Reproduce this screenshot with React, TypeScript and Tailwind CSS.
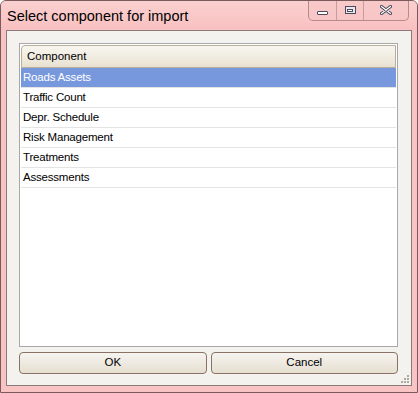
import React from "react";

const rows = ["Roads Assets", "Traffic Count", "Depr. Schedule", "Risk Management", "Treatments", "Assessments"];

export default function App() {
  return (
    <div
      className="relative w-[418px] h-[393px] overflow-hidden bg-[#f8c3c3] border border-[#7a5a5a] rounded-t-[6px] flex flex-col"
      style={{ fontFamily: '"Liberation Sans", Arial, sans-serif' }}
    >
      {/* title bar */}
      <div className="relative h-[29px] shrink-0 bg-gradient-to-b from-[#fbd0d0] to-[#f8c0c0] flex items-center pl-[6px] pt-[2px]">
        <span className="text-[14.5px] text-black leading-none">Select component for import</span>
        <div className="absolute left-[307px] top-[-1px] w-[101px] h-[21px] flex border border-[#b88a8a] border-t-0 rounded-b-[5px] bg-[#f6c4c4]/60">
          <div className="w-[28px] flex items-center justify-center border-r border-[#c99c9c]">
            <div className="mt-[5px] w-[11px] h-[4px] border border-[#4a4a5a] bg-white rounded-[1px]" />
          </div>
          <div className="w-[27px] flex items-center justify-center border-r border-[#c99c9c]">
            <div className="w-[11px] h-[8px] border-[1.5px] border-[#4a4a5a] bg-[#e8e8ee] flex items-center justify-center">
              <div className="w-[6px] h-[3px] border border-[#4a4a5a] bg-white" />
            </div>
          </div>
          <div className="flex-1 flex items-center justify-center">
            <svg width="12" height="10" viewBox="0 0 12 10">
              <path d="M1.5 1.5 L10.5 8.5 M10.5 1.5 L1.5 8.5" stroke="#4a4a5a" strokeWidth="3.2" strokeLinecap="round" />
              <path d="M1.5 1.5 L10.5 8.5 M10.5 1.5 L1.5 8.5" stroke="#ffffff" strokeWidth="1.2" strokeLinecap="round" />
            </svg>
          </div>
        </div>
      </div>
      {/* client */}
      <div className="flex-1 mx-[5px] mb-[6px] border border-[#8c7a7a] bg-[#f4f2ee] pl-[12px] pr-[13px] pt-[12px] pb-[11px] flex flex-col">
        <div className="flex-1 border border-[#a8a8a8] bg-white p-[1px] flex flex-col">
          <div className="h-[23px] border border-[#b8ae9c] rounded-tl-[4px] bg-gradient-to-b from-[#f8f6f0] to-[#e9e2d2] flex items-center pl-[5px] text-[11.5px] text-black">
            Component
          </div>
          {rows.map((r, i) => (
            <div
              key={r}
              className={`h-[20px] flex items-center pl-[2px] text-[11.5px] tracking-[-0.2px] border-b border-[#e4e4e4] ${
                i === 0 ? "bg-[#7898de] text-white" : "text-black"
              }`}
            >
              {r}
            </div>
          ))}
        </div>
        <div className="mt-[5px] flex gap-[4px] h-[22px]">
          <button className="flex-1 rounded-[4px] border border-[#8a7264] bg-gradient-to-b from-[#f6f4f0] to-[#e6dfd1] text-[11.5px] text-black">
            OK
          </button>
          <button className="flex-1 rounded-[4px] border border-[#8a7264] bg-gradient-to-b from-[#f6f4f0] to-[#e6dfd1] text-[11.5px] text-black">
            Cancel
          </button>
        </div>
      </div>
      {/* resize grip */}
      <div className="absolute right-[8px] bottom-[9px] grid grid-cols-3 gap-[1px]">
        {[0, 0, 1, 0, 1, 1, 1, 1, 1].map((v, i) => (
          <div key={i} className={`w-[2px] h-[2px] ${v ? "bg-[#b0a8a0]" : ""}`} />
        ))}
      </div>
    </div>
  );
}
